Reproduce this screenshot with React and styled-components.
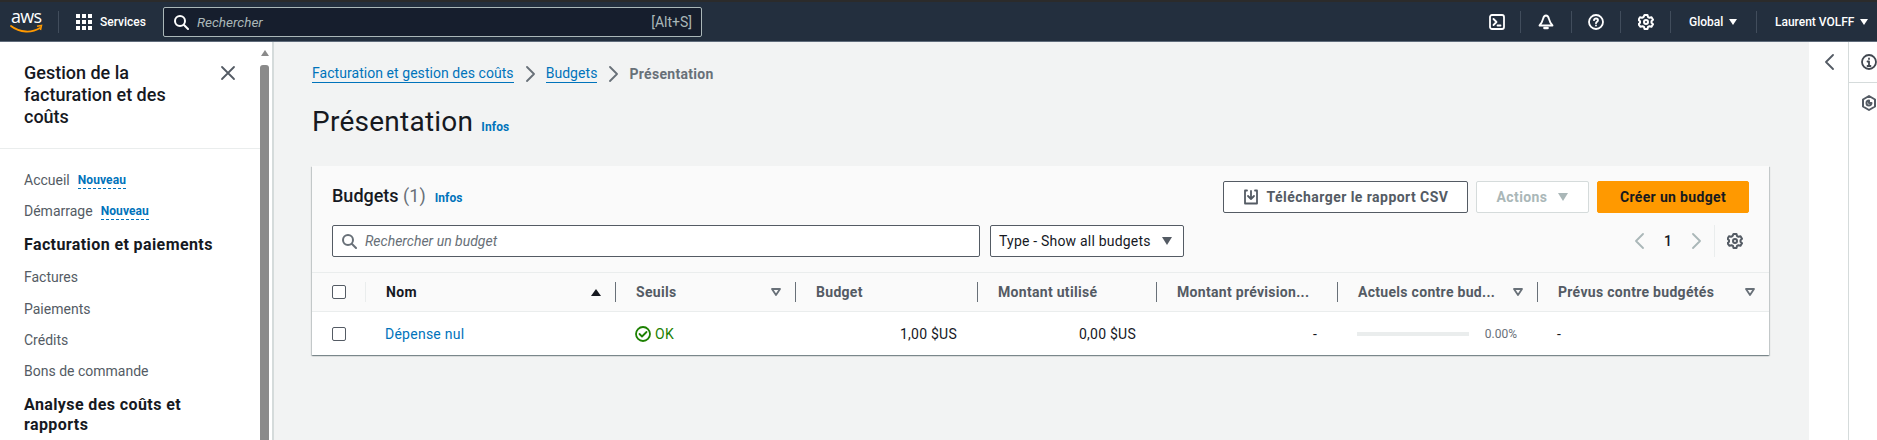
import React from "react";
import styled, { createGlobalStyle } from "styled-components";

const GlobalStyle = createGlobalStyle`
  html, body {
    margin: 0;
    height: 440px;
    overflow: hidden;
    background: #f2f3f3;
    font-family: Roboto, "Liberation Sans", sans-serif;
    font-size: 14px;
    color: #16191f;
  }
  * { box-sizing: border-box; }
`;

const Page = styled.div`
  width: 1877px;
  height: 440px;
  display: flex;
  flex-direction: column;
  overflow: hidden;
`;

/* top navigation */
const TopBar = styled.header`
  flex: 0 0 42px;
  display: flex;
  align-items: center;
  background: #232f3e;
  border-top: 2px solid #2b2b2b;
  border-bottom: 1px solid #5f6b7a;
  color: #fff;
  font-size: 12px;
`;
const Logo = styled.div`
  width: 48px;
  margin-left: 10px;
  height: 30px;
  display: flex;
  flex-direction: column;
  align-items: flex-start;
  svg { margin-top: -2px; }
`;
const LogoText = styled.span`
  font-family: "Open Sans", sans-serif;
  font-size: 18px;
  line-height: 19px;
  letter-spacing: -0.7px;
  margin-left: 1px;
  color: #fff;
`;
const NavDivider = styled.span`
  width: 1px;
  height: 22px;
  background: #414d5c;
`;
const ServicesBtn = styled.div`
  display: flex;
  align-items: center;
  gap: 8px;
  margin-left: 17px;
  width: 87px;
  font-weight: 500;
`;
const NavSearch = styled.div`
  width: 539px;
  height: 30px;
  display: flex;
  align-items: center;
  background: #161e2d;
  border: 1px solid #aab7b8;
  border-radius: 2px;
  padding: 0 9px;
  gap: 8px;
  font-size: 14px;
  color: #aab7b8;
`;
const NavPlaceholder = styled.span`
  flex: 1;
  font-style: italic;
  font-size: 13.5px;
`;
const NavRight = styled.div`
  margin-left: auto;
  display: flex;
  align-items: center;
  height: 100%;
`;
const NavIconCell = styled.div`
  width: ${(p) => p.$w}px;
  height: 22px;
  display: flex;
  align-items: center;
  justify-content: center;
  border-right: 1px solid #414d5c;
`;
const NavMenu = styled.div`
  display: flex;
  align-items: center;
  gap: 6px;
  height: 22px;
  padding-left: 18px;
  width: ${(p) => p.$w}px;
  font-weight: 500;
  border-right: ${(p) => (p.$last ? "none" : "1px solid #414d5c")};
`;
const Caret = styled.span`
  width: 0;
  height: 0;
  border-left: ${(p) => p.$s}px solid transparent;
  border-right: ${(p) => p.$s}px solid transparent;
  border-top: ${(p) => p.$h}px solid ${(p) => p.$c || "#fff"};
`;
const CaretUp = styled(Caret)`
  border-top: 0;
  border-bottom: ${(p) => p.$h}px solid ${(p) => p.$c};
`;

const Body = styled.div`
  flex: 1;
  display: flex;
  min-height: 0;
`;

/* left side navigation */
const Side = styled.aside`
  flex: 0 0 274px;
  display: flex;
  background: #fff;
  border-right: 2px solid #d5dbdb;
`;
const SideContent = styled.div`
  width: 260px;
  overflow: hidden;
`;
const SideHead = styled.div`
  height: 107px;
  padding: 20px 24px 0 24px;
  display: flex;
  justify-content: space-between;
  border-bottom: 1px solid #eaeded;
  svg { margin-top: 3px; }
`;
const SideTitle = styled.h2`
  margin: 0;
  width: 170px;
  font-size: 18px;
  line-height: 22px;
  font-weight: 500;
  color: #16191f;
`;
const SideList = styled.nav`
  padding: 15px 0 0 24px;
  display: flex;
  flex-direction: column;
`;
const SideLink = styled.div`
  height: 31.3px;
  display: flex;
  align-items: center;
  gap: 8px;
  color: #545b64;
  font-size: 14px;
`;
const NewTag = styled.span`
  color: #0073bb;
  font-size: 12px;
  font-weight: 700;
  letter-spacing: 0.1px;
  border-bottom: 1px dashed #0073bb;
  line-height: 15px;
  padding-top: 2px;
`;
const SideSection = styled.div`
  font-size: 16px;
  line-height: 20px;
  font-weight: 700;
  letter-spacing: 0.4px;
  padding: 8px 0 7px;
  width: 190px;
  color: #16191f;
`;
const ScrollTrack = styled.div`
  flex: 0 0 9px;
  margin-right: 3px;
  display: flex;
  flex-direction: column;
  align-items: center;
  background: #fff;
  padding-top: 8px;
`;
const ScrollUp = styled.span`
  width: 0;
  height: 0;
  border-left: 4px solid transparent;
  border-right: 4px solid transparent;
  border-bottom: 6px solid #8a8a8a;
`;
const ScrollThumb = styled.span`
  width: 9px;
  flex: 1;
  margin-top: 9px;
  background: #8a8a8a;
  border-radius: 3px 3px 0 0;
`;

/* main */
const Main = styled.main`
  flex: 1;
  padding: 21px 40px 0 38px;
  min-width: 0;
`;
const Crumbs = styled.div`
  display: flex;
  align-items: center;
  gap: 8px;
  height: 21px;
`;
const Crumb = styled.a`
  color: #0073bb;
  font-size: 14px;
  line-height: 18px;
  letter-spacing: 0.05px;
  border-bottom: 1px solid #0073bb;
`;
const CrumbCurrent = styled.span`
  color: #687078;
  font-weight: 700;
  letter-spacing: 0.3px;
`;
const PageTitle = styled.div`
  display: flex;
  align-items: baseline;
  gap: 8px;
  margin-top: 20px;
  height: 38px;
`;
const H1 = styled.h1`
  margin: 0;
  font-size: 28px;
  line-height: 36px;
  font-weight: 400;
  letter-spacing: 0.25px;
  color: #16191f;
`;
const InfoLink = styled.a`
  color: #0073bb;
  font-size: 12px;
  font-weight: 700;
  letter-spacing: 0.1px;
`;
const Card = styled.section`
  margin-top: 24px;
  background: #fff;
  box-shadow: 0 1px 1px 0 rgba(0, 28, 36, 0.3), 1px 1px 1px 0 rgba(0, 28, 36, 0.15),
    -1px 1px 1px 0 rgba(0, 28, 36, 0.15);
`;
const CardHead = styled.div`
  background: #fafafa;
  padding: 15px 20px 0 20px;
  height: 107px;
  border-bottom: 1px solid #eaeded;
`;
const HeadRow = styled.div`
  display: flex;
  align-items: center;
  justify-content: space-between;
  height: 32px;
`;
const CardTitle = styled.div`
  display: flex;
  align-items: baseline;
  gap: 9px;
  padding-bottom: 4px;
`;
const H2 = styled.h2`
  margin: 0;
  font-size: 18px;
  font-weight: 500;
  color: #16191f;
  span { font-weight: 400; color: #687078; }
`;
const Actions = styled.div`
  display: flex;
  gap: 8px;
`;
const Button = styled.button`
  height: 32px;
  width: ${(p) => p.$w}px;
  display: flex;
  align-items: center;
  justify-content: center;
  gap: ${(p) => p.$gap || 8}px;
  font-family: inherit;
  font-size: 14px;
  font-weight: 700;
  letter-spacing: ${(p) => p.$track || 0.25}px;
  border-radius: 2px;
  color: ${(p) => p.$fg};
  background: ${(p) => p.$bg};
  border: 1px solid ${(p) => p.$line};
  padding: 0;
`;
const FilterRow = styled.div`
  display: flex;
  align-items: center;
  height: 32px;
  margin-top: 12px;
`;
const SearchBox = styled.div`
  width: 648px;
  height: 32px;
  display: flex;
  align-items: center;
  gap: 8px;
  padding: 0 8px;
  background: #fff;
  border: 1px solid #545b64;
  border-radius: 2px;
  color: #687078;
  font-style: italic;
`;
const SelectBox = styled.div`
  margin-left: 10px;
  width: 194px;
  height: 32px;
  display: flex;
  align-items: center;
  justify-content: space-between;
  padding: 0 11px 0 8px;
  background: #fff;
  border: 1px solid #545b64;
  border-radius: 2px;
  letter-spacing: 0.2px;
  color: #16191f;
`;
const Pager = styled.div`
  margin-left: auto;
  display: flex;
  align-items: center;
  height: 32px;
`;
const PageNum = styled.span`
  width: 40px;
  text-align: center;
  font-weight: 500;
`;
const PrefsBtn = styled.div`
  margin-left: 10px;
  padding-left: 12px;
  height: 32px;
  width: 35px;
  display: flex;
  align-items: center;
  border-left: 1px solid #eaeded;
`;

/* table: both rows share this grid */
const cols = "53px 250px 180px 182px 179px 181px 200px 1fr";
const HeadGrid = styled.div`
  display: grid;
  grid-template-columns: ${cols};
  height: 39px;
  background: #fafafa;
  border-bottom: 1px solid #eaeded;
  align-items: center;
`;
const DataGrid = styled.div`
  display: grid;
  grid-template-columns: ${cols};
  height: 43px;
  align-items: center;
`;
const Th = styled.div`
  height: 20px;
  display: flex;
  align-items: center;
  justify-content: space-between;
  padding: 0 14px 0 20px;
  border-left: 1px solid ${(p) => (p.$faint ? "#eaeded" : "#687078")};
  font-weight: 700;
  letter-spacing: 0.3px;
  white-space: nowrap;
  color: ${(p) => (p.$dark ? "#16191f" : "#545b64")};
`;
const CheckCell = styled.div`
  padding-left: 20px;
  display: flex;
`;
const Check = styled.span`
  width: 14px;
  height: 14px;
  background: #fff;
  border: 1px solid #545b64;
  border-radius: 2px;
`;
const Td = styled.div`
  padding: 0 20px;
  text-align: ${(p) => (p.$right ? "right" : "left")};
  color: #16191f;
  letter-spacing: 0.25px;
  display: ${(p) => (p.$flex ? "flex" : "block")};
  align-items: center;
  gap: 4px;
`;
const RowLink = styled.a`
  color: #0073bb;
`;
const StatusOk = styled.span`
  color: #1d8102;
`;
const Progress = styled.div`
  width: 112px;
  height: 4px;
  background: #eaeded;
  margin-right: 8px;
`;
const ProgressLabel = styled.span`
  color: #687078;
  font-size: 12px;
  letter-spacing: 0;
  margin-left: 4px;
`;

/* right rail */
const Rail = styled.aside`
  flex: 0 0 68px;
  display: flex;
  background: #fff;
`;
const RailToggle = styled.div`
  width: 39px;
  padding: 12px 0 0 13px;
`;
const RailTabs = styled.div`
  flex: 1;
  border-left: 1px solid #d5dbdb;
`;
const RailTab = styled.div`
  height: 41px;
  padding: 12px 0 0 12px;
  border-bottom: 1px solid ${(p) => (p.$line ? "#d5dbdb" : "transparent")};
`;

const Ico = ({ size = 16, color = "currentColor", w = 2, children }) => (
  <svg width={size} height={size} viewBox="0 0 16 16" fill="none" stroke={color} strokeWidth={w} strokeLinecap="round" strokeLinejoin="round">
    {children}
  </svg>
);
const SearchIcon = ({ color }) => (
  <Ico color={color}>
    <circle cx="7" cy="7" r="5" />
    <path d="M11 11l4 4" />
  </Ico>
);
const Chevron = ({ dir, color, size = 16 }) => (
  <Ico color={color} size={size} w={1.8}>
    <path d={dir === "left" ? "M11 1L4 8l7 7" : "M5 1l7 7-7 7"} />
  </Ico>
);
const Gear = ({ color }) => (
  <Ico color={color}>
    <circle cx="8" cy="8" r="2" />
    <path d="M6.500 1h3l.5 2 1.500.8 2-.6 1.500 2.600-1.500 1.400v1.600l1.500 1.400-1.500 2.600-2-.6-1.500.8-.5 2h-3l-.5-2-1.500-.8-2 .6L.5 10.200 2 8.800V7.200L.5 5.800 2 3.200l2 .6L5.500 3z" />
  </Ico>
);
const FilterCaret = () => (
  <svg width="10" height="8" viewBox="0 0 10 8" fill="none" stroke="#687078" strokeWidth="1.800" strokeLinejoin="round">
    <path d="M1 1h8L5 7z" />
  </svg>
);
const Grid9 = () => (
  <svg width="16" height="16" viewBox="0 0 16 16" fill="#fff">
    {[0, 6, 12].flatMap((y) => [0, 6, 12].map((x) => <rect key={`${x}-${y}`} x={x} y={y} width="4" height="4" />))}
  </svg>
);

export default function App() {
  return (
    <Page>
      <GlobalStyle />
      <TopBar>
        <Logo>
          <LogoText>aws</LogoText>
          <svg width="33" height="10" viewBox="0 0 33 10" fill="none">
            <path d="M1 2c9 7 21 7 29 2" stroke="#f90" strokeWidth="1.800" strokeLinecap="round" />
            <path d="M27 2.200l4.500-.7-1 4.500" stroke="#f90" strokeWidth="1.500" />
          </svg>
        </Logo>
        <NavDivider />
        <ServicesBtn>
          <Grid9 />
          Services
        </ServicesBtn>
        <NavSearch>
          <SearchIcon color="#fff" />
          <NavPlaceholder>Rechercher</NavPlaceholder>
          <span>[Alt+S]</span>
        </NavSearch>
        <NavRight>
          <NavIconCell $w={48}>
            <Ico color="#fff" w={1.8}>
              <rect x="1" y="1" width="14" height="14" rx="2" />
              <path d="M4.500 5l3 3-3 3M8.500 11.500h3" />
            </Ico>
          </NavIconCell>
          <NavIconCell $w={51}>
            <Ico color="#fff" w={1.8}>
              <path d="M8 1.500C6.500 1.500 5.500 3 5 5S3.500 9.500 1.500 11.500h13C12.500 9.500 11.500 7 11 5S9.500 1.500 8 1.500z" />
              <path d="M6.500 14h3" strokeWidth="2.600" />
            </Ico>
          </NavIconCell>
          <NavIconCell $w={49}>
            <Ico color="#fff" w={1.8}>
              <circle cx="8" cy="8" r="7" />
              <path d="M6 6.200C6 5 7 4.500 8 4.500s2 .7 2 1.700c0 1.500-2 1.500-2 3M8 11.300v.2" />
            </Ico>
          </NavIconCell>
          <NavIconCell $w={50}>
            <Gear color="#fff" />
          </NavIconCell>
          <NavMenu $w={86}>
            Global <Caret $s={4} $h={6} />
          </NavMenu>
          <NavMenu $w={120} $last>
            Laurent VOLFF <Caret $s={4} $h={6} />
          </NavMenu>
        </NavRight>
      </TopBar>
      <Body>
        <Side>
          <SideContent>
            <SideHead>
              <SideTitle>Gestion de la facturation et des coûts</SideTitle>
              <Ico color="#545b64" w={1.8}>
                <path d="M2 2l12 12M14 2L2 14" />
              </Ico>
            </SideHead>
            <SideList>
              <SideLink>
                Accueil <NewTag>Nouveau</NewTag>
              </SideLink>
              <SideLink>
                Démarrage <NewTag>Nouveau</NewTag>
              </SideLink>
              <SideSection>Facturation et paiements</SideSection>
              <SideLink>Factures</SideLink>
              <SideLink>Paiements</SideLink>
              <SideLink>Crédits</SideLink>
              <SideLink>Bons de commande</SideLink>
              <SideSection>Analyse des coûts et rapports</SideSection>
            </SideList>
          </SideContent>
          <ScrollTrack>
            <ScrollUp />
            <ScrollThumb />
          </ScrollTrack>
        </Side>
        <Main>
          <Crumbs>
            <Crumb>Facturation et gestion des coûts</Crumb>
            <Chevron dir="right" color="#687078" />
            <Crumb>Budgets</Crumb>
            <Chevron dir="right" color="#687078" />
            <CrumbCurrent>Présentation</CrumbCurrent>
          </Crumbs>
          <PageTitle>
            <H1>Présentation</H1>
            <InfoLink>Infos</InfoLink>
          </PageTitle>
          <Card>
            <CardHead>
              <HeadRow>
                <CardTitle>
                  <H2>
                    Budgets <span>(1)</span>
                  </H2>
                  <InfoLink>Infos</InfoLink>
                </CardTitle>
                <Actions>
                  <Button $w={245} $track={0.45} $fg="#545b64" $bg="#fff" $line="#545b64">
                    <Ico color="#545b64" w={1.8}>
                      <path d="M4 1.500H2v13h12v-13h-2M8 2v8M5 7l3 3 3-3" />
                    </Ico>
                    Télécharger le rapport CSV
                  </Button>
                  <Button $w={113} $gap={11} $track={0.4} $fg="#aab7b8" $bg="#fff" $line="#d5dbdb">
                    Actions <Caret $s={5} $h={8} $c="#aab7b8" />
                  </Button>
                  <Button $w={152} $track={0.35} $fg="#16191f" $bg="#ff9900" $line="#ff9900">
                    Créer un budget
                  </Button>
                </Actions>
              </HeadRow>
              <FilterRow>
                <SearchBox>
                  <SearchIcon color="#687078" />
                  Rechercher un budget
                </SearchBox>
                <SelectBox>
                  Type - Show all budgets <Caret $s={5} $h={8} $c="#545b64" />
                </SelectBox>
                <Pager>
                  <Chevron dir="left" color="#aab7b8" />
                  <PageNum>1</PageNum>
                  <Chevron dir="right" color="#aab7b8" />
                  <PrefsBtn>
                    <Gear color="#545b64" />
                  </PrefsBtn>
                </Pager>
              </FilterRow>
            </CardHead>
            <HeadGrid>
              <CheckCell>
                <Check />
              </CheckCell>
              <Th $faint $dark>
                Nom <CaretUp $s={5} $h={7} $c="#16191f" />
              </Th>
              <Th>
                Seuils <FilterCaret />
              </Th>
              <Th>Budget</Th>
              <Th>Montant utilisé</Th>
              <Th>Montant prévision...</Th>
              <Th>
                Actuels contre bud... <FilterCaret />
              </Th>
              <Th>
                Prévus contre budgétés <FilterCaret />
              </Th>
            </HeadGrid>
            <DataGrid>
              <CheckCell>
                <Check />
              </CheckCell>
              <Td>
                <RowLink>Dépense nul</RowLink>
              </Td>
              <Td $flex>
                <Ico color="#1d8102" w={1.8}>
                  <circle cx="8" cy="8" r="7" />
                  <path d="M4.500 8l2.500 2.500 4.500-4.500" />
                </Ico>
                <StatusOk>OK</StatusOk>
              </Td>
              <Td $right>1,00 $US</Td>
              <Td $right>0,00 $US</Td>
              <Td $right>-</Td>
              <Td $flex>
                <Progress />
                <ProgressLabel>0.00%</ProgressLabel>
              </Td>
              <Td>-</Td>
            </DataGrid>
          </Card>
        </Main>
        <Rail>
          <RailToggle>
            <Chevron dir="left" color="#545b64" />
          </RailToggle>
          <RailTabs>
            <RailTab $line>
              <Ico color="#414750" w={1.8}>
                <circle cx="8" cy="8" r="7" />
                <path d="M8 7.500V12M8 4.500v.5M6.500 7.500H8M6.500 12h3" />
              </Ico>
            </RailTab>
            <RailTab>
              <Ico color="#545b64" w={2}>
                <path d="M8 1l6 3.500v7L8 15l-6-3.500v-7z" />
                <path d="M8 5.500a2.500 2.500 0 1 0 2.500 2.500H8z" />
              </Ico>
            </RailTab>
          </RailTabs>
        </Rail>
      </Body>
    </Page>
  );
}
